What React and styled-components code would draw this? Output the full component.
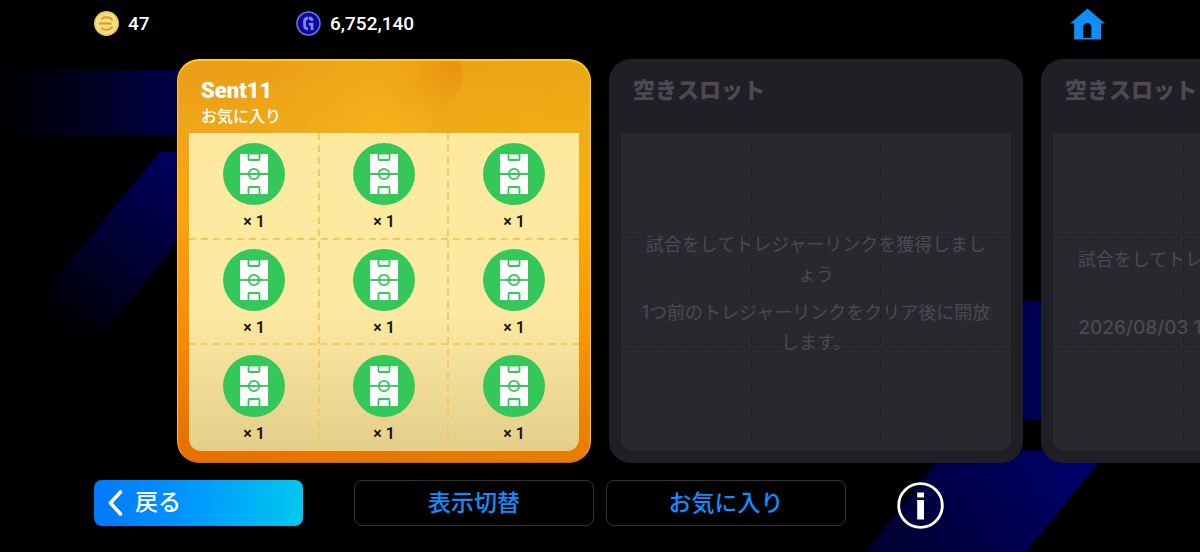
import React from "react";
import styled, { createGlobalStyle, css } from "styled-components";

const GlobalStyle = createGlobalStyle`
  *, *::before, *::after { box-sizing: border-box; }
  html, body { margin: 0; background: #000; }
  body {
    font-family: Roboto, "Noto Sans CJK JP", sans-serif;
    color: #fff;
    overflow-x: hidden;
  }
  button { font: inherit; color: inherit; background: none; border: 0; padding: 0; cursor: pointer; }
  ul, h2, p { margin: 0; padding: 0; }
  ul { list-style: none; }
`;

const Page = styled.div`
  position: relative;
  min-height: 100vh;
  overflow: hidden;
  background: #000;
  display: flex;
  flex-direction: column;
`;

const Backdrop = styled.svg`
  position: absolute;
  inset: 0;
  width: 100%;
  height: 100%;
`;

const TopBar = styled.header`
  position: relative;
  display: flex;
  align-items: center;
  height: 59px;
  padding: 0 95px 12px 94px;
`;

const Balance = styled.div`
  display: flex;
  align-items: center;
  gap: 9px;
  min-width: 202px;
  font-size: 19px;
  line-height: 24px;
  font-weight: 500;
`;

const HomeButton = styled.button`
  display: flex;
  margin-left: auto;
`;

const Slots = styled.main`
  position: relative;
  display: flex;
  gap: 18px;
  padding-left: 177px;
`;

const cardTones = {
  gold: css`
    background:
      linear-gradient(90deg, #f0dc0000, #f0dc0022),
      linear-gradient(180deg, #ec9c18 0%, #eea619 16%, #fca40e 38%, #fa8a03 68%, #e67000 96%);
    box-shadow: inset 0 2px 1px #ffd21f, inset 2px 0 1px -1px #ffc928, inset -2px 0 1px -1px #ffd21f,
      inset 0 -1px 1px #c86400;
  `,
  empty: css`
    background: #201f25;
    color: #4b4a50;
  `,
};

const Card = styled.article`
  position: relative;
  flex: 0 0 414px;
  display: flex;
  flex-direction: column;
  padding: 0 12px 12px;
  border-radius: 22px;
  overflow: hidden;
  ${(p) => cardTones[p.$tone]}
`;

const Wave = styled.svg`
  position: absolute;
  top: 2px;
  left: 2px;
`;

const CardHead = styled.header`
  position: relative;
  height: 74px;
  padding: 18px 12px 0;
`;

const CardTitle = styled.h2`
  font-size: 22px;
  line-height: 28px;
  font-weight: 900;
`;

const CardNote = styled.p`
  font-size: 16px;
  line-height: 24px;
  font-weight: 500;
`;

const dashes = (c, w) => css`
  background-image:
    repeating-linear-gradient(180deg, ${c} 0 7px, transparent 7px 12px),
    repeating-linear-gradient(180deg, ${c} 0 7px, transparent 7px 12px),
    repeating-linear-gradient(90deg, ${c} 0 7px, transparent 7px 12px),
    repeating-linear-gradient(90deg, ${c} 0 7px, transparent 7px 12px),
    var(--fill);
  background-size: ${w} 100%, ${w} 100%, 100% ${w}, 100% ${w}, 100% 100%;
  background-position: 33.3% 0, 66.6% 0, 0 33.3%, 0 66.6%, 0 0;
  background-repeat: no-repeat;
`;

const RewardGrid = styled.ul`
  position: relative;
  --fill: linear-gradient(180deg, #fee99f 0%, #fde9a2 55%, #e4cf8a 100%);
  ${dashes("#f3cb5a", "2px")}
  display: grid;
  grid-template-columns: repeat(3, 1fr);
  grid-auto-rows: 106px;
  border-radius: 0 0 12px 12px;
`;

const Reward = styled.li`
  display: flex;
  flex-direction: column;
  align-items: center;
  gap: 7px;
  padding-top: 10px;
  color: #14100a;
  font-size: 16px;
  line-height: 20px;
  font-weight: 600;
`;

const EmptyBoard = styled.div`
  --fill: linear-gradient(#29282e, #29282e);
  ${dashes("#222127", "1px")}
  height: 318px;
  border-radius: 4px 4px 12px 12px;
  display: flex;
  flex-direction: column;
  justify-content: center;
  gap: 8px;
  padding: 3px 17px 0;
  text-align: center;
  font-family: Inter, "Noto Sans CJK JP", sans-serif;
  font-size: 18px;
  line-height: 30px;
  line-break: anywhere;
`;

const OpeningTime = styled.time`
  font-size: 19px;
  font-weight: 500;
`;

const BottomBar = styled.footer`
  position: relative;
  display: flex;
  gap: 12px;
  padding: 17px 24px 20px 94px;
  font-size: 23px;
  line-height: 30px;
  font-weight: 500;
`;

const BackButton = styled.button`
  display: flex;
  align-items: center;
  gap: 12px;
  width: 209px;
  height: 46px;
  margin-right: 39px;
  padding: 0 0 0 14px;
  border-radius: 8px;
  background: linear-gradient(90deg, #0078ff 0%, #0096ff 45%, #00c8ee 100%);
`;

const OutlineButton = styled.button`
  width: 240px;
  height: 46px;
  padding-top: 2px;
  border: 1px solid #343438;
  border-radius: 8px;
  background: #000;
  color: #0f8fff;
`;

const InfoButton = styled.button`
  display: flex;
  align-self: flex-start;
  margin: 2px 0 0 39px;
`;

function CoinIcon() {
  return (
    <svg width="25" height="25" viewBox="0 0 25 25" aria-hidden="true">
      <circle cx="12.5" cy="12.5" r="11.8" fill="#f6dd80" stroke="#e9c258" strokeWidth="1.4" />
      <g fill="none" stroke="#d3a032" strokeWidth="2">
        <path d="M7.2 8.200C8.400 6.800 10.400 6.200 12.600 6.200s4.600.9 5.800 3.200" />
        <path d="M7.200 16.800c1.200 1.400 3.200 2 5.400 2s4.600-.9 5.800-3.200" />
        <path d="M5 12.500h12.500" strokeWidth="2.200" />
      </g>
    </svg>
  );
}

function GpIcon() {
  return (
    <svg width="25" height="25" viewBox="0 0 25 25" aria-hidden="true">
      <circle cx="12.500" cy="12.500" r="11.500" fill="#0a0a9c" stroke="#7474e6" strokeWidth="1.500" />
      <g fill="none" stroke="#7f86f2" strokeWidth="2.800">
        <path d="M11.900 7c-2.400.2-3.300 1.600-3.300 3.600v4c0 2 .9 3.200 3.300 3.400" />
        <path d="M12.700 7c2.200.1 3.300.9 3.600 2.800" />
        <path d="M12.600 13.200h3.400v5.800" />
      </g>
    </svg>
  );
}

function HomeIcon() {
  return (
    <svg width="35" height="32" viewBox="0 0 35 32" aria-hidden="true">
      <path
        fill="#0f8fff"
        d="M17.500 0.500 35 15.500H31V31.500H4.200V15.500H0ZM13.200 29.800H21.400V19.500C21.400 16.700 19.600 15 17.300 15S13.200 16.700 13.200 19.500Z"
        fillRule="evenodd"
      />
    </svg>
  );
}

function PitchIcon() {
  return (
    <svg width="62" height="62" viewBox="0 0 62 62" aria-hidden="true">
      <circle cx="31" cy="31" r="31" fill="#34c759" />
      <rect x="17" y="11" width="28" height="40" fill="#fff" />
      <g fill="none" stroke="#34c759" strokeWidth="1.800">
        <path d="M17 31h28" />
        <circle cx="31" cy="31" r="5.200" />
        <path d="M25.500 10v6a1 1 0 0 0 1 1h9a1 1 0 0 0 1-1V10" />
        <path d="M25.500 52v-7a1 1 0 0 1 1-1h9a1 1 0 0 1 1 1V52" />
        <path d="M26 11h10" strokeWidth="1" />
      </g>
    </svg>
  );
}

function InfoIcon() {
  return (
    <svg width="47" height="47" viewBox="0 0 47 47" aria-hidden="true">
      <circle cx="23.500" cy="23.500" r="21.800" fill="none" stroke="#fff" strokeWidth="2.800" />
      <path fill="#fff" d="M20.200 10.500h6.800v5h-6.800zM20.200 18h6.800v19.500h-6.800z" />
    </svg>
  );
}

function Scenery() {
  return (
    <Backdrop viewBox="0 0 1200 552" preserveAspectRatio="xMinYMin slice" aria-hidden="true">
      <defs>
        <linearGradient id="band" x1="0" x2="1">
          <stop offset="0" stopColor="#000003" />
          <stop offset="0.500" stopColor="#000022" />
          <stop offset="1" stopColor="#000050" />
        </linearGradient>
        <linearGradient id="slash" gradientUnits="userSpaceOnUse" x1="195" y1="165" x2="75" y2="340">
          <stop offset="0" stopColor="#000064" />
          <stop offset="0.500" stopColor="#000034" />
          <stop offset="1" stopColor="#000000" />
        </linearGradient>
        <linearGradient id="corner" gradientUnits="userSpaceOnUse" x1="1080" y1="460" x2="900" y2="580">
          <stop offset="0" stopColor="#00006a" />
          <stop offset="1" stopColor="#000030" />
        </linearGradient>
      </defs>
      <rect x="0" y="70" width="190" height="65" fill="url(#band)" />
      <path d="M160 152H240L200 213L70 375L54 360V280Z" fill="url(#slash)" />
      <rect x="1000" y="301" width="60" height="119" fill="#000055" />
      <path d="M946 451H1108L1026 552H865Z" fill="url(#corner)" />
    </Backdrop>
  );
}

function GoldCard({ title, note, rewards }) {
  return (
    <Card $tone="gold">
      <Wave width="410" height="74" viewBox="0 0 410 74" aria-hidden="true">
        <defs>
          <radialGradient id="wave" gradientUnits="userSpaceOnUse" cx="274" cy="8" r="100">
            <stop offset="0" stopColor="#ea930e" />
            <stop offset="1" stopColor="#f2ae1c" stopOpacity="0" />
          </radialGradient>
          <radialGradient id="glow" gradientUnits="userSpaceOnUse" cx="240" cy="90" r="170">
            <stop offset="0" stopColor="#f5b71e" />
            <stop offset="1" stopColor="#f2ae1c" stopOpacity="0" />
          </radialGradient>
        </defs>
        <path d="M10 0H281C286 10 285 26 276 36C264 48 251 54 251 74H10Z" fill="url(#glow)" />
        <path d="M10 0H281C286 10 285 26 276 36C264 48 251 54 251 74H10Z" fill="url(#wave)" />
      </Wave>
      <CardHead>
        <CardTitle>{title}</CardTitle>
        <CardNote>{note}</CardNote>
      </CardHead>
      <RewardGrid>
        {rewards.map((count, i) => (
          <Reward key={i}>
            <PitchIcon />
            <span>× {count}</span>
          </Reward>
        ))}
      </RewardGrid>
    </Card>
  );
}

function EmptyCard({ children }) {
  return (
    <Card $tone="empty">
      <CardHead>
        <CardTitle>空きスロット</CardTitle>
      </CardHead>
      <EmptyBoard>
        <p>試合をしてトレジャーリンクを獲得しましょう</p>
        <p>{children}</p>
      </EmptyBoard>
    </Card>
  );
}

export default function App() {
  return (
    <>
      <GlobalStyle />
      <Page lang="ja">
        <Scenery />
        <TopBar>
          <Balance>
            <CoinIcon />
            47
          </Balance>
          <Balance>
            <GpIcon />
            6,752,140
          </Balance>
          <HomeButton type="button" aria-label="ホーム">
            <HomeIcon />
          </HomeButton>
        </TopBar>
        <Slots>
          <GoldCard title="Sent11" note="お気に入り" rewards={[1, 1, 1, 1, 1, 1, 1, 1, 1]} />
          <EmptyCard>1つ前のトレジャーリンクをクリア後に開放します。</EmptyCard>
          <EmptyCard>
            <OpeningTime>2026/08/03 11:00</OpeningTime>以降に開放されます。
          </EmptyCard>
        </Slots>
        <BottomBar>
          <BackButton type="button">
            <svg width="15" height="26" viewBox="0 0 15 26" aria-hidden="true">
              <path d="M12.500 2 2.500 13 12.500 24" fill="none" stroke="#fff" strokeWidth="3.600" strokeLinecap="round" strokeLinejoin="round" />
            </svg>
            戻る
          </BackButton>
          <OutlineButton type="button">表示切替</OutlineButton>
          <OutlineButton type="button">お気に入り</OutlineButton>
          <InfoButton type="button" aria-label="情報">
            <InfoIcon />
          </InfoButton>
        </BottomBar>
      </Page>
    </>
  );
}
